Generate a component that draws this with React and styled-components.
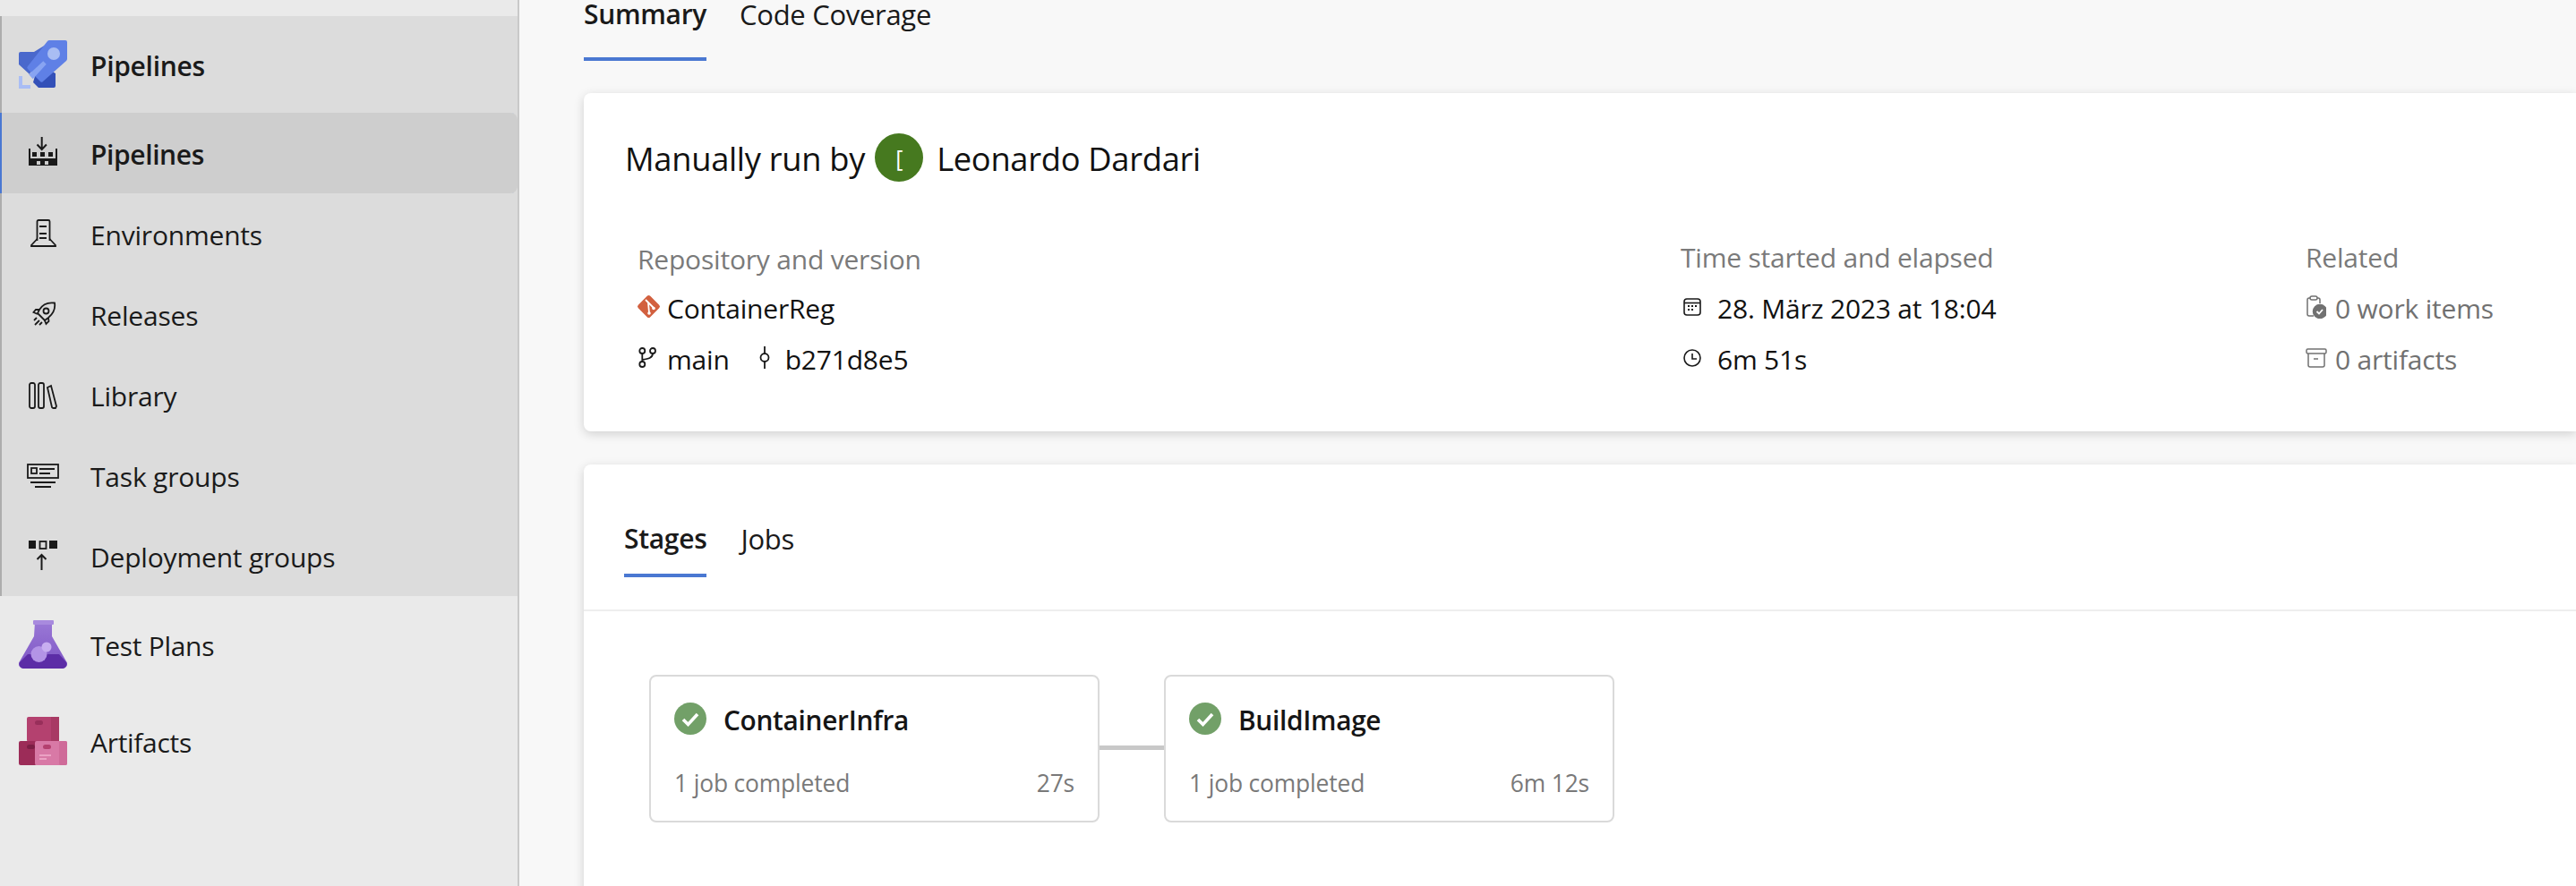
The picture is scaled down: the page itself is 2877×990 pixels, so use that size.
import React from 'react';
import styled, { createGlobalStyle } from 'styled-components';

const BLUE = '#4a78d2';
const FONT = '"Open Sans", "Noto Sans", sans-serif';

const Global = createGlobalStyle`
  html, body {
    margin: 0;
    padding: 0;
    background: #f8f8f8;
    overflow: hidden;
  }
  * {
    box-sizing: border-box;
  }
`;

const Page = styled.div`
  display: flex;
  width: 2877px;
  height: 990px;
  overflow: hidden;
  font-family: ${FONT};
  color: #1a1a1a;
`;

const Sidebar = styled.nav`
  flex: 0 0 580px;
  height: 100%;
  padding-top: 18px;
  background: #eaeaea;
  border-right: 2px solid #c9c9c9;
`;

const Group = styled.div`
  background: #dcdcdc;
  border-left: 2px solid #adadad;
`;

const ServiceRow = styled.div`
  display: flex;
  align-items: center;
  height: 108px;
  padding-top: 3px;
  padding-left: ${p => (p.$inGroup ? '19px' : '21px')};
  font-size: 30px;
  font-weight: ${p => (p.$strong ? 600 : 400)};
  letter-spacing: -0.3px;

  > svg {
    flex: 0 0 54px;
    margin-top: -3px;
    margin-right: 26px;
  }
`;

const NavRow = styled.div`
  display: flex;
  align-items: center;
  height: 90px;
  margin-left: ${p => (p.$selected ? '-2px' : '0')};
  padding-top: 3px;
  padding-left: ${p => (p.$selected ? '101px' : '99px')};
  position: relative;
  font-size: 30px;
  font-weight: ${p => (p.$selected ? 600 : 400)};
  letter-spacing: ${p => (p.$selected ? '-0.4px' : '-0.2px')};
  background: ${p => (p.$selected ? '#cecece' : 'transparent')};
  border-radius: ${p => (p.$selected ? '0 8px 8px 0' : '0')};
  box-shadow: ${p => (p.$selected ? `inset 2px 0 0 ${BLUE}` : 'none')};
`;

const NavIcon = styled.span`
  position: absolute;
  left: ${p => p.$left}px;
  top: ${p => p.$top}px;
  display: flex;
  color: #1a1a1a;
`;

const Main = styled.main`
  flex: 1;
  min-width: 0;
  padding-left: 72px;
`;

const Tabs = styled.div`
  display: flex;
  gap: ${p => (p.$inner ? '38px' : '37px')};
`;

const Tab = styled.div`
  height: ${p => (p.$large ? '68px' : '61px')};
  font-size: ${p => (p.$active ? '30px' : '31px')};
  line-height: ${p => (p.$large ? '32px' : '36px')};
  letter-spacing: -0.3px;
  font-weight: ${p => (p.$active ? 600 : 400)};
  border-bottom: 4px solid ${p => (p.$active ? BLUE : 'transparent')};
`;

const Card = styled.section`
  background: #fff;
  border-radius: 8px 0 0 8px;
  box-shadow: 0 3px 12px rgba(0, 0, 0, 0.16);
`;

const SummaryCard = styled(Card)`
  height: 378px;
  margin-top: 36px;
  padding: 45px 0 0 46px;
`;

const StagesCard = styled(Card)`
  height: 520px;
  margin-top: 37px;
  padding-top: 65px;
`;

const Title = styled.h1`
  display: flex;
  align-items: center;
  gap: 11px;
  height: 54px;
  margin: 0 0 56px;
  padding-top: 2px;
  font-size: 36.3px;
  font-weight: 400;
  letter-spacing: -0.3px;
  color: #111;
`;

const Avatar = styled.span`
  display: flex;
  align-items: center;
  justify-content: center;
  width: 54px;
  height: 54px;
  margin-top: -2px;
  margin-right: 4px;
  border-radius: 50%;
  background: #46791f;
  color: #fff;
  font-size: 25px;
`;

const Details = styled.div`
  display: grid;
  grid-template-columns: 1165px 698px 1fr;
  margin-left: 14px;
`;

const Column = styled.div`
  display: flex;
  flex-direction: column;
`;

const Label = styled.div`
  height: 57px;
  padding-top: ${p => (p.$drop ? '2px' : '0')};
  font-size: 30px;
  line-height: 57px;
  letter-spacing: -0.2px;
  color: #7a7a7a;
`;

const InfoRow = styled.div`
  display: flex;
  align-items: center;
  height: 57px;
  margin-left: ${p => (p.$tight ? '-1px' : '0')};
  font-size: 30px;
  letter-spacing: -0.2px;
  color: ${p => (p.$muted ? '#717171' : '#111')};
`;

const InfoIcon = styled.span`
  display: flex;
  flex: 0 0 ${p => p.$width}px;
  margin-left: ${p => p.$left || 0}px;
  margin-bottom: 4px;
  color: ${p => (p.$muted ? '#717171' : '#1a1a1a')};
`;

const StageTabs = styled.div`
  padding-left: 45px;
  padding-bottom: 36px;
  border-bottom: 2px solid #eeeeee;
`;

const Flow = styled.div`
  display: flex;
  align-items: center;
  padding: 71px 0 0 73px;
`;

const StageCard = styled.div`
  flex: 0 0 503px;
  height: 165px;
  padding: 29px 26px 0 26px;
  border: 2px solid #dadada;
  border-radius: 8px;
`;

const StageHead = styled.div`
  display: flex;
  align-items: center;
  gap: 19px;
  height: 36px;
  padding-top: 2px;
  font-size: 29.8px;
  font-weight: 600;
  letter-spacing: -0.3px;
  color: #151515;

  > svg {
    margin-top: -2px;
  }
`;

const StageFoot = styled.div`
  display: flex;
  justify-content: space-between;
  margin-top: 37px;
  font-size: 26.4px;
  line-height: 34px;
  letter-spacing: -0.15px;
  color: #797979;
`;

const Connector = styled.div`
  flex: 0 0 72px;
  height: 5px;
  margin-bottom: 3px;
  background: #c8c8c8;
`;

const PipelinesLogo = () => (
  <svg width="54" height="54" viewBox="0 0 54 54">
    <path fill="#4a68cc" d="M0 15a2 2 0 0 1 2-2h15L30 5 12 38 0 27z" />
    <path fill="#3350b8" d="M22 26l19 11v14a2 2 0 0 1-2 2H22l-6-6z" />
    <path
      fill="#5f80e6"
      d="M34 0h18a2 2 0 0 1 2 2v19a3 3 0 0 1-1 2L27 46a2 2 0 0 1-3 0L10 32a2 2 0 0 1 0-3L32 1a3 3 0 0 1 2-1z"
    />
    <circle cx="39" cy="15" r="7" fill="#a9bdf3" />
    <path fill="#88a4f2" d="M27.3 23.3l3.4 3.4-15 16.6-4.4-5z" />
    <path fill="#a9bdf5" d="M0 40h4v10h9v4H0z" />
  </svg>
);

const PipelinesNavIcon = () => (
  <svg width="32" height="32" viewBox="0 0 32 32">
    <path d="M14.7 0v14M9.5 8.5l5.2 5.5 5.2-5.5" fill="none" stroke="currentColor" strokeWidth="2" />
    <path
      fill="currentColor"
      fillRule="evenodd"
      d="M0 13h2v11h28V13h2v19H0zM9 27v4h4v-4zm9 0v4h4v-4z"
    />
    <path fill="currentColor" d="M4 17h5v5H4zM13 17h5v5h-5zM22 17h5v5h-5z" />
  </svg>
);

const EnvironmentIcon = () => (
  <svg width="30" height="31" viewBox="0 0 30 31" fill="none" stroke="currentColor" strokeWidth="1.8">
    <path d="M7.5 24V2.5A1.5 1.5 0 0 1 9 1h11a1.5 1.5 0 0 1 1.5 1.5V24" />
    <path d="M7.5 22L1 29v1h27v-1l-6.5-7" />
    <path d="M10 8h8M10 16h8M10 21h8" />
  </svg>
);

const RocketIcon = () => (
  <svg width="27" height="28" viewBox="0 0 27 28" fill="none" stroke="currentColor" strokeWidth="1.8">
    <path d="M25 1.5C17 .5 11 4 8 9l-2 4 8 8 4-3c5-4 8-10 7-16.5z" />
    <circle cx="15.5" cy="10.5" r="3" />
    <path d="M8 9H4l-2.5 3L6 14M18 18l.5 4-3 3-2-5M5 18l-3 3M8 21l-5 5M11 23l-3 3" />
  </svg>
);

const LibraryIcon = () => (
  <svg width="32" height="30" viewBox="0 0 32 30" fill="none" stroke="currentColor" strokeWidth="1.8">
    <rect x="1" y="1" width="6" height="28" rx="2" />
    <rect x="11" y="1" width="6" height="28" rx="2" />
    <path d="M21 6l4-2 6 23-1 2h-2a2 2 0 0 1-2-1z" />
  </svg>
);

const TaskGroupIcon = () => (
  <svg width="36" height="28" viewBox="0 0 36 28" fill="none" stroke="currentColor" strokeWidth="1.8">
    <rect x="1" y="1" width="34" height="15" />
    <rect x="5" y="5" width="6" height="6" />
    <path d="M14 6h17M14 11h12M4 21h28M9 26h18" />
  </svg>
);

const DeploymentIcon = () => (
  <svg width="32" height="34" viewBox="0 0 32 34">
    <rect x="0" y="0" width="8" height="9" fill="currentColor" />
    <rect x="12.5" y="1" width="7" height="8" fill="none" stroke="currentColor" strokeWidth="1.8" />
    <rect x="23" y="0" width="9" height="9" fill="currentColor" />
    <path d="M14.5 33V16M9.5 21l5-5 5 5" fill="none" stroke="currentColor" strokeWidth="2" />
  </svg>
);

const TestPlansLogo = () => (
  <svg width="54" height="54" viewBox="0 0 54 54">
    <defs>
      <linearGradient id="flask" x1="0" y1="0" x2="0" y2="1">
        <stop offset="0" stopColor="#9a78d6" />
        <stop offset="1" stopColor="#7d55c4" />
      </linearGradient>
    </defs>
    <path fill="url(#flask)" d="M18 2h19v16l16 28a5 5 0 0 1-4 8H5a5 5 0 0 1-4-8l16-28z" />
    <path fill="#5c2da6" d="M10 38h35l8 9a5 5 0 0 1-4 7H5a5 5 0 0 1-4-7z" />
    <rect x="16" y="0" width="23" height="5" rx="1" fill="#a88ade" />
    <ellipse cx="22.5" cy="38" rx="9" ry="9" fill="#b394e6" />
    <circle cx="31" cy="30" r="5.5" fill="#c7aef0" />
  </svg>
);

const ArtifactsLogo = () => (
  <svg width="54" height="54" viewBox="0 0 54 54">
    <rect x="9" y="0" width="36" height="28" rx="2" fill="#b4416f" />
    <rect x="36" y="0" width="9" height="28" fill="#a83a64" />
    <rect x="18" y="4" width="9" height="5" rx="2.5" fill="#982f5a" />
    <rect x="0" y="27" width="20" height="27" rx="2" fill="#9c2c58" />
    <rect x="9" y="31" width="9" height="5" rx="2.5" fill="#7c1f45" />
    <rect x="18" y="27" width="36" height="27" rx="2" fill="#d879a6" />
    <rect x="45" y="27" width="9" height="27" rx="2" fill="#cf6b99" />
    <rect x="27" y="31" width="9" height="5" rx="2.5" fill="#b4416f" />
    <path d="M23 43h13M23 47h8" stroke="#eba2c4" strokeWidth="2" />
  </svg>
);

const RepoIcon = () => (
  <svg width="27" height="27" viewBox="0 0 27 27">
    <rect x="4" y="4" width="19" height="19" rx="2.5" fill="#d2603f" transform="rotate(45 13.5 13.5)" />
    <path d="M10 6l9.5 9.5M13 9.5l1 11" stroke="#fff" strokeWidth="1.8" fill="none" />
    <circle cx="14" cy="21" r="1.8" fill="#fff" />
    <circle cx="19" cy="15.5" r="1.8" fill="#fff" />
  </svg>
);

const BranchIcon = () => (
  <svg width="20" height="23" viewBox="0 0 20 23" fill="none" stroke="currentColor" strokeWidth="1.8">
    <circle cx="4.3" cy="4" r="3" />
    <circle cx="16" cy="4" r="3" />
    <circle cx="4.3" cy="19" r="3" />
    <path d="M4.3 7v9M16 7c0 5-5 6-11.700 7" />
  </svg>
);

const CommitIcon = () => (
  <svg width="12" height="25" viewBox="0 0 12 25" fill="none" stroke="currentColor" strokeWidth="1.8">
    <circle cx="6" cy="12.5" r="4.5" />
    <path d="M6 0v8M6 17v8" />
  </svg>
);

const CalendarIcon = () => (
  <svg width="20" height="20" viewBox="0 0 20 20" fill="none" stroke="currentColor" strokeWidth="1.6">
    <rect x="1" y="1" width="18" height="18" rx="3" />
    <path d="M1 5.5h18" />
    <path d="M5 9h2M9 9h2M13 9h2M5 13h2M9 13h2" strokeWidth="2" />
  </svg>
);

const ClockIcon = () => (
  <svg width="20" height="20" viewBox="0 0 20 20" fill="none" stroke="currentColor" strokeWidth="1.6">
    <circle cx="10" cy="10" r="9" />
    <path d="M10 5v6h5" />
  </svg>
);

const WorkItemIcon = () => (
  <svg width="23" height="26" viewBox="0 0 23 26" fill="none" stroke="currentColor" strokeWidth="1.5">
    <path d="M9 23H4a2 2 0 0 1-2-2V5a2 2 0 0 1 2-2h1M13 3h1a2 2 0 0 1 2 2v4" />
    <rect x="5" y="1" width="8" height="4" rx="2" />
    <circle cx="16" cy="18" r="7.5" fill="currentColor" />
    <path d="M12.5 18l2.5 2.5 4-4.5" stroke="#fff" strokeWidth="1.8" />
  </svg>
);

const ArchiveIcon = () => (
  <svg width="24" height="22" viewBox="0 0 24 22" fill="none" stroke="currentColor" strokeWidth="1.5">
    <rect x="1" y="1" width="22" height="5" rx="1.5" />
    <path d="M3 6v13a2 2 0 0 0 2 2h14a2 2 0 0 0 2-2V6M9 12h5" />
  </svg>
);

const CheckIcon = () => (
  <svg width="36" height="36" viewBox="0 0 36 36">
    <circle cx="18" cy="18" r="18" fill="#72a068" />
    <path d="M10 19l5.5 5.5L26 13" fill="none" stroke="#fff" strokeWidth="3.6" />
  </svg>
);

const navItems = [
  { label: 'Pipelines', icon: <PipelinesNavIcon />, left: 32, top: 27, selected: true },
  { label: 'Environments', icon: <EnvironmentIcon />, left: 32, top: 29 },
  { label: 'Releases', icon: <RocketIcon />, left: 34, top: 31 },
  { label: 'Library', icon: <LibraryIcon />, left: 30, top: 31 },
  { label: 'Task groups', icon: <TaskGroupIcon />, left: 28, top: 32 },
  { label: 'Deployment groups', icon: <DeploymentIcon />, left: 30, top: 28 }
];

const stages = [
  { name: 'ContainerInfra', time: '27s' },
  { name: 'BuildImage', time: '6m 12s' }
];

export default function App() {
  return (
    <Page>
      <Global />
      <Sidebar>
        <Group>
          <ServiceRow $inGroup $strong>
            <PipelinesLogo />
            Pipelines
          </ServiceRow>
          {navItems.map(item => (
            <NavRow key={item.label} $selected={item.selected}>
              <NavIcon $left={item.left} $top={item.top}>
                {item.icon}
              </NavIcon>
              {item.label}
            </NavRow>
          ))}
        </Group>
        <ServiceRow>
          <TestPlansLogo />
          Test Plans
        </ServiceRow>
        <ServiceRow>
          <ArtifactsLogo />
          Artifacts
        </ServiceRow>
      </Sidebar>

      <Main>
        <Tabs>
          <Tab $large $active>Summary</Tab>
          <Tab $large>Code Coverage</Tab>
        </Tabs>

        <SummaryCard>
          <Title>
            Manually run by
            <Avatar>[</Avatar>
            Leonardo Dardari
          </Title>
          <Details>
            <Column>
              <Label $drop>Repository and version</Label>
              <InfoRow $tight>
                <InfoIcon $width={34}><RepoIcon /></InfoIcon>
                ContainerReg
              </InfoRow>
              <InfoRow $tight>
                <InfoIcon $left={2} $width={32}><BranchIcon /></InfoIcon>
                main
                <InfoIcon $left={33} $width={29}><CommitIcon /></InfoIcon>
                b271d8e5
              </InfoRow>
            </Column>
            <Column>
              <Label>Time started and elapsed</Label>
              <InfoRow>
                <InfoIcon $left={3} $width={38}><CalendarIcon /></InfoIcon>
                28. März 2023 at 18:04
              </InfoRow>
              <InfoRow>
                <InfoIcon $left={3} $width={38}><ClockIcon /></InfoIcon>
                6m 51s
              </InfoRow>
            </Column>
            <Column>
              <Label>Related</Label>
              <InfoRow $muted>
                <InfoIcon $muted $width={33}><WorkItemIcon /></InfoIcon>
                0 work items
              </InfoRow>
              <InfoRow $muted>
                <InfoIcon $muted $width={33}><ArchiveIcon /></InfoIcon>
                0 artifacts
              </InfoRow>
            </Column>
          </Details>
        </SummaryCard>

        <StagesCard>
          <StageTabs>
            <Tabs $inner>
              <Tab $active>Stages</Tab>
              <Tab>Jobs</Tab>
            </Tabs>
          </StageTabs>
          <Flow>
            {stages.map((stage, index) => (
              <React.Fragment key={stage.name}>
                {index > 0 && <Connector />}
                <StageCard>
                  <StageHead>
                    <CheckIcon />
                    {stage.name}
                  </StageHead>
                  <StageFoot>
                    <span>1 job completed</span>
                    <span>{stage.time}</span>
                  </StageFoot>
                </StageCard>
              </React.Fragment>
            ))}
          </Flow>
        </StagesCard>
      </Main>
    </Page>
  );
}
